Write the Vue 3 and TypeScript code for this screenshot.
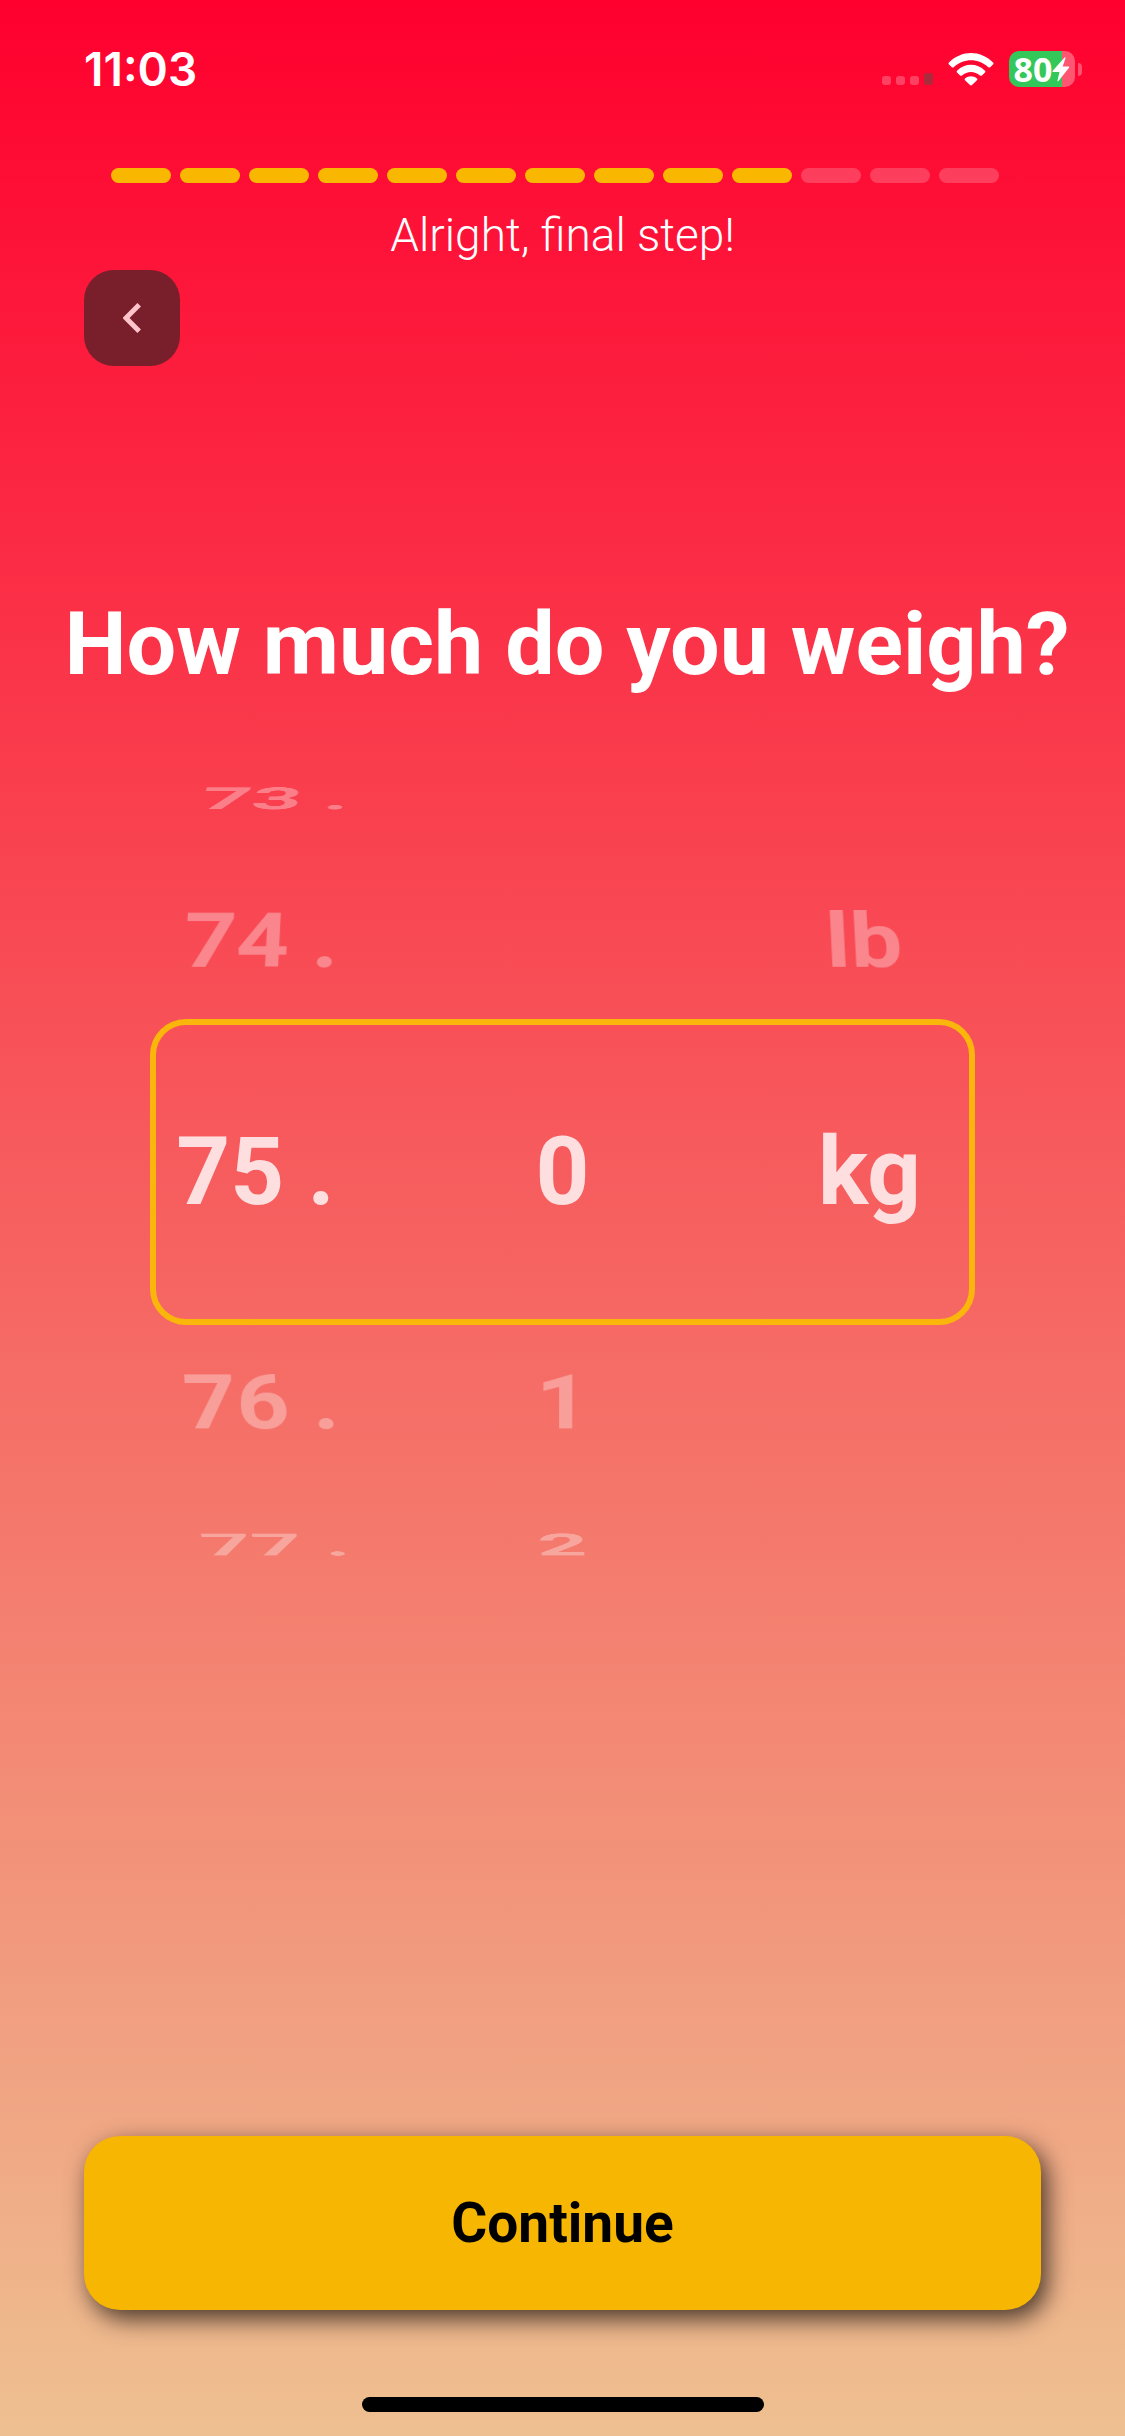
<script setup lang="ts">
import { computed, ref } from 'vue'

interface Column {
  label: string
  items: string[]
  selected: number
}

interface WheelItem {
  text: string
  index: number
  offset: number
}

const STEP_ANGLE = 32
const WHEEL_RADIUS = 444
const VISIBLE_EACH_SIDE = 2

const totalSteps = 13
const currentStep = 10

const columns = ref<Column[]>([
  { label: 'Weight', items: Array.from({ length: 200 }, (_, i) => `${i + 30} .`), selected: 45 },
  { label: 'Decimal', items: Array.from({ length: 10 }, (_, i) => `${i}`), selected: 0 },
  { label: 'Unit', items: ['lb', 'kg'], selected: 1 },
])

const wheels = computed(() =>
  columns.value.map((column) => ({
    label: column.label,
    items: column.items
      .map((text, index): WheelItem => ({ text, index, offset: index - column.selected }))
      .filter((item) => Math.abs(item.offset) <= VISIBLE_EACH_SIDE),
  })),
)

function wheelTransform(offset: number): string {
  return `translateZ(${-WHEEL_RADIUS}px) rotateX(${-offset * STEP_ANGLE}deg) translateZ(${WHEEL_RADIUS}px)`
}

function select(column: number, index: number): void {
  columns.value[column].selected = index
}
</script>

<template>
  <main class="screen">
    <header class="status-bar">
      <time class="clock">11:03</time>
      <div class="indicators">
        <svg class="signal" viewBox="0 0 52 14" aria-hidden="true">
          <rect x="0" y="4" width="9" height="9" rx="3" fill="#fff" fill-opacity="0.24" />
          <rect x="14" y="4" width="9" height="9" rx="3" fill="#fff" fill-opacity="0.24" />
          <rect x="28" y="4" width="9" height="9" rx="3" fill="#fff" fill-opacity="0.24" />
          <rect x="42" y="1" width="9" height="12" rx="3" fill="#8c3a40" fill-opacity="0.75" />
        </svg>
        <svg class="wifi" viewBox="0 0 46 34" aria-label="Wi-Fi">
          <path d="M1 10.5C13.5-2.2 32.500-2.200 45 10.500Q46 11.500 45 12.500L42.200 15.200Q41.300 16 40.300 15.200C30.500 5.900 15.500 5.900 5.700 15.200Q4.700 16 3.800 15.200L1 12.500Q0 11.500 1 10.500Z" fill="#fff" />
          <path d="M9 18.700C17 10.800 29 10.800 37 18.700Q37.900 19.600 37 20.500L33.900 23.400Q33 24.200 32 23.400C26.800 18.700 19.200 18.700 14 23.400Q13 24.200 12.100 23.400L9 20.500Q8.100 19.600 9 18.700Z" fill="#fff" />
          <path d="M17 26.600C20.500 23.400 25.500 23.400 29 26.600Q29.900 27.400 29 28.300L24 33.100Q23 34 22 33.100L17 28.300Q16.100 27.400 17 26.600Z" fill="#fff" />
        </svg>
        <div class="battery">
          <div class="battery-body">
            <span class="battery-level">80</span>
            <svg class="bolt" viewBox="0 0 18 25" aria-hidden="true">
              <path d="M12.500 0.500L0.500 14Q0 15 1.200 15H7.500L5.500 23.500Q5.400 25 6.500 24L17.200 10.500Q17.600 9.500 16.500 9.500H10.700L13.500 1.200Q13.500 0 12.500 0.500Z" fill="#fff" />
            </svg>
          </div>
          <span class="battery-tip"></span>
        </div>
      </div>
    </header>

    <div class="progress" role="progressbar" aria-label="Steps" :aria-valuenow="currentStep" aria-valuemin="0" :aria-valuemax="totalSteps">
      <span v-for="step in totalSteps" :key="step" class="segment" :class="{ done: step <= currentStep }"></span>
    </div>
    <p class="hint">Alright, final step!</p>

    <button class="back" type="button" aria-label="Back">
      <svg viewBox="0 0 18 30" aria-hidden="true">
        <path d="M16.200 1.800L3 15L16.200 28.200" fill="none" stroke="#ffc4cb" stroke-width="5" />
      </svg>
    </button>

    <h1 class="title">How much do you weigh?</h1>

    <section class="picker">
      <div class="selection"></div>
      <div class="wheels">
        <ul v-for="(wheel, c) in wheels" :key="wheel.label" class="wheel" role="listbox" :aria-label="wheel.label">
          <li
            v-for="item in wheel.items"
            :key="item.index"
            class="item"
            :class="{ active: item.offset === 0 }"
            role="option"
            :aria-selected="item.offset === 0"
            :style="{ transform: wheelTransform(item.offset) }"
            @click="select(c, item.index)"
          >{{ item.text }}</li>
        </ul>
      </div>
    </section>

    <footer class="footer">
      <button class="continue" type="button">Continue</button>
      <div class="home-indicator"></div>
    </footer>
  </main>
</template>

<style>
body {
  margin: 0;
}
</style>

<style scoped>
.screen {
  display: flex;
  flex-direction: column;
  min-height: 100vh;
  box-sizing: border-box;
  overflow: hidden;
  background: linear-gradient(180deg, #ff002e 0%, #eec091 100%);
  color: #fff;
  font-family: Roboto, "Liberation Sans", sans-serif;
}

.status-bar {
  display: flex;
  justify-content: space-between;
  align-items: center;
  height: 138px;
  padding: 0 43px 0 84px;
}

.clock {
  font-family: Inter, "Liberation Sans", sans-serif;
  font-size: 46px;
  font-weight: 600;
  line-height: 54px;
}

.indicators {
  display: flex;
  align-items: center;
}

.signal {
  width: 52px;
  height: 14px;
  margin: 20px 14px 0 0;
}

.wifi {
  width: 46px;
  height: 34px;
  margin-right: 15px;
}

.battery {
  display: flex;
  align-items: center;
  gap: 3px;
}

.battery-body {
  display: flex;
  align-items: center;
  justify-content: center;
  width: 66px;
  height: 36px;
  border-radius: 10px;
  background: linear-gradient(90deg, #34c759 80%, #ff5672 80%);
}

.battery-level {
  font-family: "Noto Sans", sans-serif;
  font-size: 34px;
  font-weight: 700;
  line-height: 36px;
}

.bolt {
  width: 18px;
  height: 25px;
}

.battery-tip {
  width: 4px;
  height: 13px;
  border-radius: 0 4px 4px 0;
  background: rgba(255, 255, 255, 0.3);
}

.progress {
  display: flex;
  gap: 9px;
  margin: 30px 126px 0 111px;
}

.segment {
  flex: 1;
  height: 15px;
  border-radius: 8px;
  background: rgba(255, 255, 255, 0.2);
}

.segment.done {
  background: #f9b700;
}

.hint {
  margin: 22px 0 5px;
  font-size: 46px;
  font-weight: 300;
  line-height: 60px;
  text-align: center;
}

.back {
  display: flex;
  align-items: center;
  justify-content: center;
  width: 96px;
  height: 96px;
  margin: 0 84px;
  padding: 0;
  border: 0;
  border-radius: 30px;
  background: #781f2b;
}

.back svg {
  width: 18px;
  height: 30px;
}

.title {
  margin: 224px 0 75px;
  padding-left: 9px;
  font-size: 88px;
  font-weight: 700;
  line-height: 108px;
  text-align: center;
  white-space: nowrap;
}

.picker {
  display: grid;
  align-items: center;
}

.selection,
.wheels {
  grid-area: 1 / 1;
}

.selection {
  height: 306px;
  margin: 0 150px;
  box-sizing: border-box;
  border: 6px solid #fbb60b;
  border-radius: 36px;
}

.wheels {
  display: flex;
  padding: 246px 102px;
  perspective: 3600px;
}

.wheel {
  display: grid;
  flex: 1;
  margin: 0;
  padding: 0;
  list-style: none;
  transform-style: preserve-3d;
}

.item {
  grid-area: 1 / 1;
  font-size: 94px;
  font-weight: 700;
  line-height: 306px;
  text-align: center;
  color: rgba(255, 255, 255, 0.33);
  cursor: pointer;
}

.item.active {
  color: rgba(255, 255, 255, 0.8);
}

.footer {
  display: flex;
  flex-direction: column;
  align-items: center;
  margin-top: auto;
  padding: 0 84px 24px;
}

.continue {
  align-self: stretch;
  height: 174px;
  margin-bottom: 87px;
  border: 0;
  border-radius: 36px;
  background: #f7b602;
  box-shadow: 6px 9px 24px rgba(0, 0, 0, 0.7);
  color: #000;
  font-family: inherit;
  font-size: 55px;
  font-weight: 700;
  line-height: 66px;
}

.home-indicator {
  width: 402px;
  height: 15px;
  border-radius: 8px;
  background: #000;
}
</style>
